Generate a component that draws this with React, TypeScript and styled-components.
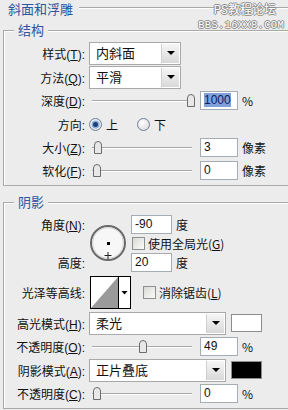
import styled, { createGlobalStyle } from "styled-components";

const GlobalStyle = createGlobalStyle`
  html, body {
    margin: 0;
    padding: 0;
    background: #ececec;
  }
  body {
    font-family: "Liberation Sans", "Noto Sans CJK SC", sans-serif;
  }
`;

const Panel = styled.div`
  position: relative;
  width: 288px;
  height: 410px;
  overflow: hidden;
  background: #ececec;
  color: #111;
  font-size: 12px;
`;

const TopBar = styled.div`
  display: flex;
  align-items: center;
  height: 18px;
  padding-left: 8px;
`;

const PanelTitle = styled.span`
  font-size: 13px;
  line-height: 18px;
  color: #2b56a0;
  font-family: "Noto Sans CJK SC", sans-serif;
`;

const TitleRule = styled.div`
  flex: 1;
  height: 1px;
  margin-left: 6px;
  margin-top: -3px;
  background: #a9a9a9;
  box-shadow: 0 1px 0 #fff;
`;

const Watermark = styled.div`
  position: absolute;
  top: 1px;
  right: 4px;
  display: flex;
  flex-direction: column;
  align-items: flex-end;
  gap: 3px;
  color: #fff;
  text-shadow: 1px 0 #8a8a8a, -1px 0 #8a8a8a, 0 1px #8a8a8a, 0 -1px #8a8a8a;
`;

const WatermarkLine = styled.span<{ $mono?: boolean }>`
  font-family: ${(p) =>
    p.$mono ? '"Liberation Mono", monospace' : '"Noto Sans CJK SC", sans-serif'};
  font-size: ${(p) => (p.$mono ? "10.5px" : "12px")};
  line-height: ${(p) => (p.$mono ? "12px" : "15px")};
  letter-spacing: ${(p) => (p.$mono ? "0.3px" : "0")};
  margin-right: ${(p) => (p.$mono ? "0" : "8px")};
`;

const Group = styled.fieldset<{ $top: number }>`
  margin: ${(p) => p.$top}px -12px 0 3px;
  padding: 3px 0 3px 0;
  border: 1px solid #a9a9a9;
  box-shadow: inset 1px 1px 0 #fff;
  min-width: 0;
`;

const Legend = styled.legend`
  margin-left: 10px;
  padding: 0 4px;
  font-size: 13px;
  line-height: 16px;
  color: #2b56a0;
  background: #ececec;
  font-family: "Noto Sans CJK SC", sans-serif;
`;

const Row = styled.div<{ $h: number }>`
  display: flex;
  align-items: center;
  height: ${(p) => p.$h}px;
`;

const Label = styled.span`
  width: 85px;
  flex: none;
  box-sizing: border-box;
  padding-right: 4px;
  text-align: right;
  white-space: nowrap;
`;

const SelectBox = styled.div<{ $w: number }>`
  display: flex;
  box-sizing: border-box;
  width: ${(p) => p.$w}px;
  height: 23px;
  border: 1px solid #a9a9a9;
  background: #fff;
`;

const SelectText = styled.span`
  flex: 1;
  padding-left: 6px;
  font-size: 13px;
  line-height: 21px;
`;

const DropButton = styled.div`
  display: flex;
  align-items: center;
  justify-content: center;
  width: 17px;
  margin: 1px;
  border-left: 1px solid #cfcfcf;
  background: linear-gradient(#f6f6f6, #d8d8d8);
`;

const Arrow = styled.span`
  width: 0;
  height: 0;
  border-left: 4px solid transparent;
  border-right: 4px solid transparent;
  border-top: 4px solid #000;
`;

const SliderTrack = styled.div`
  position: relative;
  flex: none;
  width: 107px;
  height: 16px;
  margin-right: 4px;

  &::before {
    content: "";
    position: absolute;
    left: 3px;
    right: 4px;
    top: 7px;
    height: 1px;
    background: #a7a7a7;
    box-shadow: 0 1px 0 #fff;
  }
`;

const Thumb = styled.svg`
  position: absolute;
  top: 1px;
`;

const NumBox = styled.div<{ $w: number }>`
  flex: none;
  box-sizing: border-box;
  width: ${(p) => p.$w}px;
  height: 19px;
  padding-left: 3px;
  border: 1px solid #a6acb4;
  background: #fff;
  line-height: 17px;
`;

const Selected = styled.span`
  background: #7fa0d9;
  color: #0c2060;
`;

const Unit = styled.span`
  margin-left: 4px;
  font-family: "Noto Sans CJK SC", sans-serif;
`;

const RadioCircle = styled.span<{ $on?: boolean }>`
  display: inline-flex;
  align-items: center;
  justify-content: center;
  box-sizing: border-box;
  width: 13px;
  height: 13px;
  border-radius: 50%;
  border: 1px solid #6f7f95;
  background: radial-gradient(circle at 40% 35%, #ffffff, #d4d4d4);
  margin-right: 4px;

  &::after {
    content: "";
    display: ${(p) => (p.$on ? "block" : "none")};
    width: 5px;
    height: 5px;
    border-radius: 50%;
    background: #1e3f73;
    box-shadow: 0 0 0 1.5px #8fb3e0;
  }
`;

const OptionText = styled.span<{ $gap?: number }>`
  margin-right: ${(p) => p.$gap ?? 0}px;
  font-family: "Noto Sans CJK SC", sans-serif;
  white-space: nowrap;
`;

const CheckBox = styled.span<{ $left?: number }>`
  flex: none;
  box-sizing: border-box;
  width: 13px;
  height: 13px;
  margin-left: ${(p) => p.$left ?? 0}px;
  margin-right: 3px;
  border: 1px solid #8e8f8f;
  background: linear-gradient(135deg, #d9d9d4, #fbfbfb);
`;

const AngleGrid = styled.div`
  display: grid;
  grid-template-columns: 85px 42px 1fr;
  grid-template-rows: 22px 16px 22px;
  align-items: center;
  height: 60px;
`;

const DialCell = styled.div`
  grid-column: 2;
  grid-row: 1 / 4;
  align-self: center;
  display: flex;
`;

const Cell = styled.div<{ $col: number; $row: number }>`
  grid-column: ${(p) => p.$col};
  grid-row: ${(p) => p.$row};
  display: flex;
  align-items: center;
`;

const ContourWrap = styled.div`
  display: flex;
  margin-left: 1px;
`;

const Swatch = styled.div<{ $color: string }>`
  flex: none;
  box-sizing: border-box;
  width: 31px;
  height: 18px;
  margin-left: 5px;
  border: 1px solid #8c8c8c;
  background: ${(p) => p.$color};
`;

function Select({ width, value }: { width: number; value: string }) {
  return (
    <SelectBox $w={width}>
      <SelectText>{value}</SelectText>
      <DropButton>
        <Arrow />
      </DropButton>
    </SelectBox>
  );
}

function Slider({ pct }: { pct: number }) {
  return (
    <SliderTrack>
      <Thumb width="8" height="13" viewBox="0 0 8 13" style={{ left: 4 + pct * 94 }}>
        <path
          d="M0.5 4 Q0.5 0.5 4 0.5 Q7.5 0.5 7.5 4 V12.5 H0.5 Z"
          fill="#e8e8e8"
          stroke="#6c6c6c"
        />
      </Thumb>
    </SliderTrack>
  );
}

function SliderRow({ label, pct, value, unit, sel }: any) {
  return (
    <Row $h={23}>
      <Label>{label}</Label>
      <Slider pct={pct} />
      <NumBox $w={38}>{sel ? <Selected>{value}</Selected> : value}</NumBox>
      <Unit>{unit}</Unit>
    </Row>
  );
}

function Dial() {
  return (
    <svg width="38" height="38" viewBox="0 0 38 38">
      <circle cx="19" cy="19" r="17" fill="#f7f7f7" stroke="#6a6a6a" strokeWidth="2" />
      <circle cx="19" cy="19" r="15.5" fill="none" stroke="#d2d2d2" strokeWidth="1" />
      <rect x="18" y="18" width="3" height="3" fill="#000" />
      <path d="M19 28 V35 M15.5 31.5 H22.5" stroke="#222" strokeWidth="1" />
    </svg>
  );
}

function Contour() {
  return (
    <ContourWrap>
      <svg width="41" height="33" viewBox="0 0 41 33">
        <rect x="0.5" y="0.5" width="40" height="32" fill="#fff" stroke="#000" />
        <path d="M1 32 L28 1 L28 32 Z" fill="#9a9a9a" />
        <line x1="28.5" y1="1" x2="28.5" y2="32" stroke="#000" />
        <path d="M31.5 15 H37.5 L34.5 18.5 Z" fill="#000" />
      </svg>
    </ContourWrap>
  );
}

export default function App() {
  return (
    <>
      <GlobalStyle />
      <Panel>
        <TopBar>
          <PanelTitle>斜面和浮雕</PanelTitle>
          <TitleRule />
        </TopBar>
        <Watermark>
          <WatermarkLine>PS教程论坛</WatermarkLine>
          <WatermarkLine $mono>BBS.16XX8.COM</WatermarkLine>
        </Watermark>

        <Group $top={4}>
          <Legend>结构</Legend>
          <Row $h={24}>
            <Label>
              样式(<u>T</u>):
            </Label>
            <Select width={92} value="内斜面" />
          </Row>
          <Row $h={24}>
            <Label>
              方法(<u>Q</u>):
            </Label>
            <Select width={92} value="平滑" />
          </Row>
          <SliderRow
            label={
              <>
                深度(<u>D</u>):
              </>
            }
            pct={1}
            value="1000"
            unit="%"
            sel
          />
          <Row $h={24}>
            <Label>方向:</Label>
            <RadioCircle $on />
            <OptionText $gap={19}>上</OptionText>
            <RadioCircle />
            <OptionText>下</OptionText>
          </Row>
          <SliderRow
            label={
              <>
                大小(<u>Z</u>):
              </>
            }
            pct={0.01}
            value="3"
            unit="像素"
          />
          <SliderRow
            label={
              <>
                软化(<u>F</u>):
              </>
            }
            pct={0}
            value="0"
            unit="像素"
          />
        </Group>

        <Group $top={8}>
          <Legend>阴影</Legend>
          <AngleGrid>
            <Cell $col={1} $row={1}>
              <Label>
                角度(<u>N</u>):
              </Label>
            </Cell>
            <DialCell>
              <Dial />
            </DialCell>
            <Cell $col={3} $row={1}>
              <NumBox $w={41}>-90</NumBox>
              <Unit>度</Unit>
            </Cell>
            <Cell $col={3} $row={2}>
              <CheckBox $left={1} />
              <OptionText>
                使用全局光(<u>G</u>)
              </OptionText>
            </Cell>
            <Cell $col={1} $row={3}>
              <Label>高度:</Label>
            </Cell>
            <Cell $col={3} $row={3}>
              <NumBox $w={41}>20</NumBox>
              <Unit>度</Unit>
            </Cell>
          </AngleGrid>
          <Row $h={38}>
            <Label>光泽等高线:</Label>
            <Contour />
            <CheckBox $left={12} />
            <OptionText>
              消除锯齿(<u>L</u>)
            </OptionText>
          </Row>
          <Row $h={24}>
            <Label>
              高光模式(<u>H</u>):
            </Label>
            <Select width={137} value="柔光" />
            <Swatch $color="#fff" />
          </Row>
          <SliderRow
            label={
              <>
                不透明度(<u>O</u>):
              </>
            }
            pct={0.49}
            value="49"
            unit="%"
          />
          <Row $h={24}>
            <Label>
              阴影模式(<u>A</u>):
            </Label>
            <Select width={137} value="正片叠底" />
            <Swatch $color="#000" />
          </Row>
          <SliderRow
            label={
              <>
                不透明度(<u>C</u>):
              </>
            }
            pct={0}
            value="0"
            unit="%"
          />
        </Group>
      </Panel>
    </>
  );
}
